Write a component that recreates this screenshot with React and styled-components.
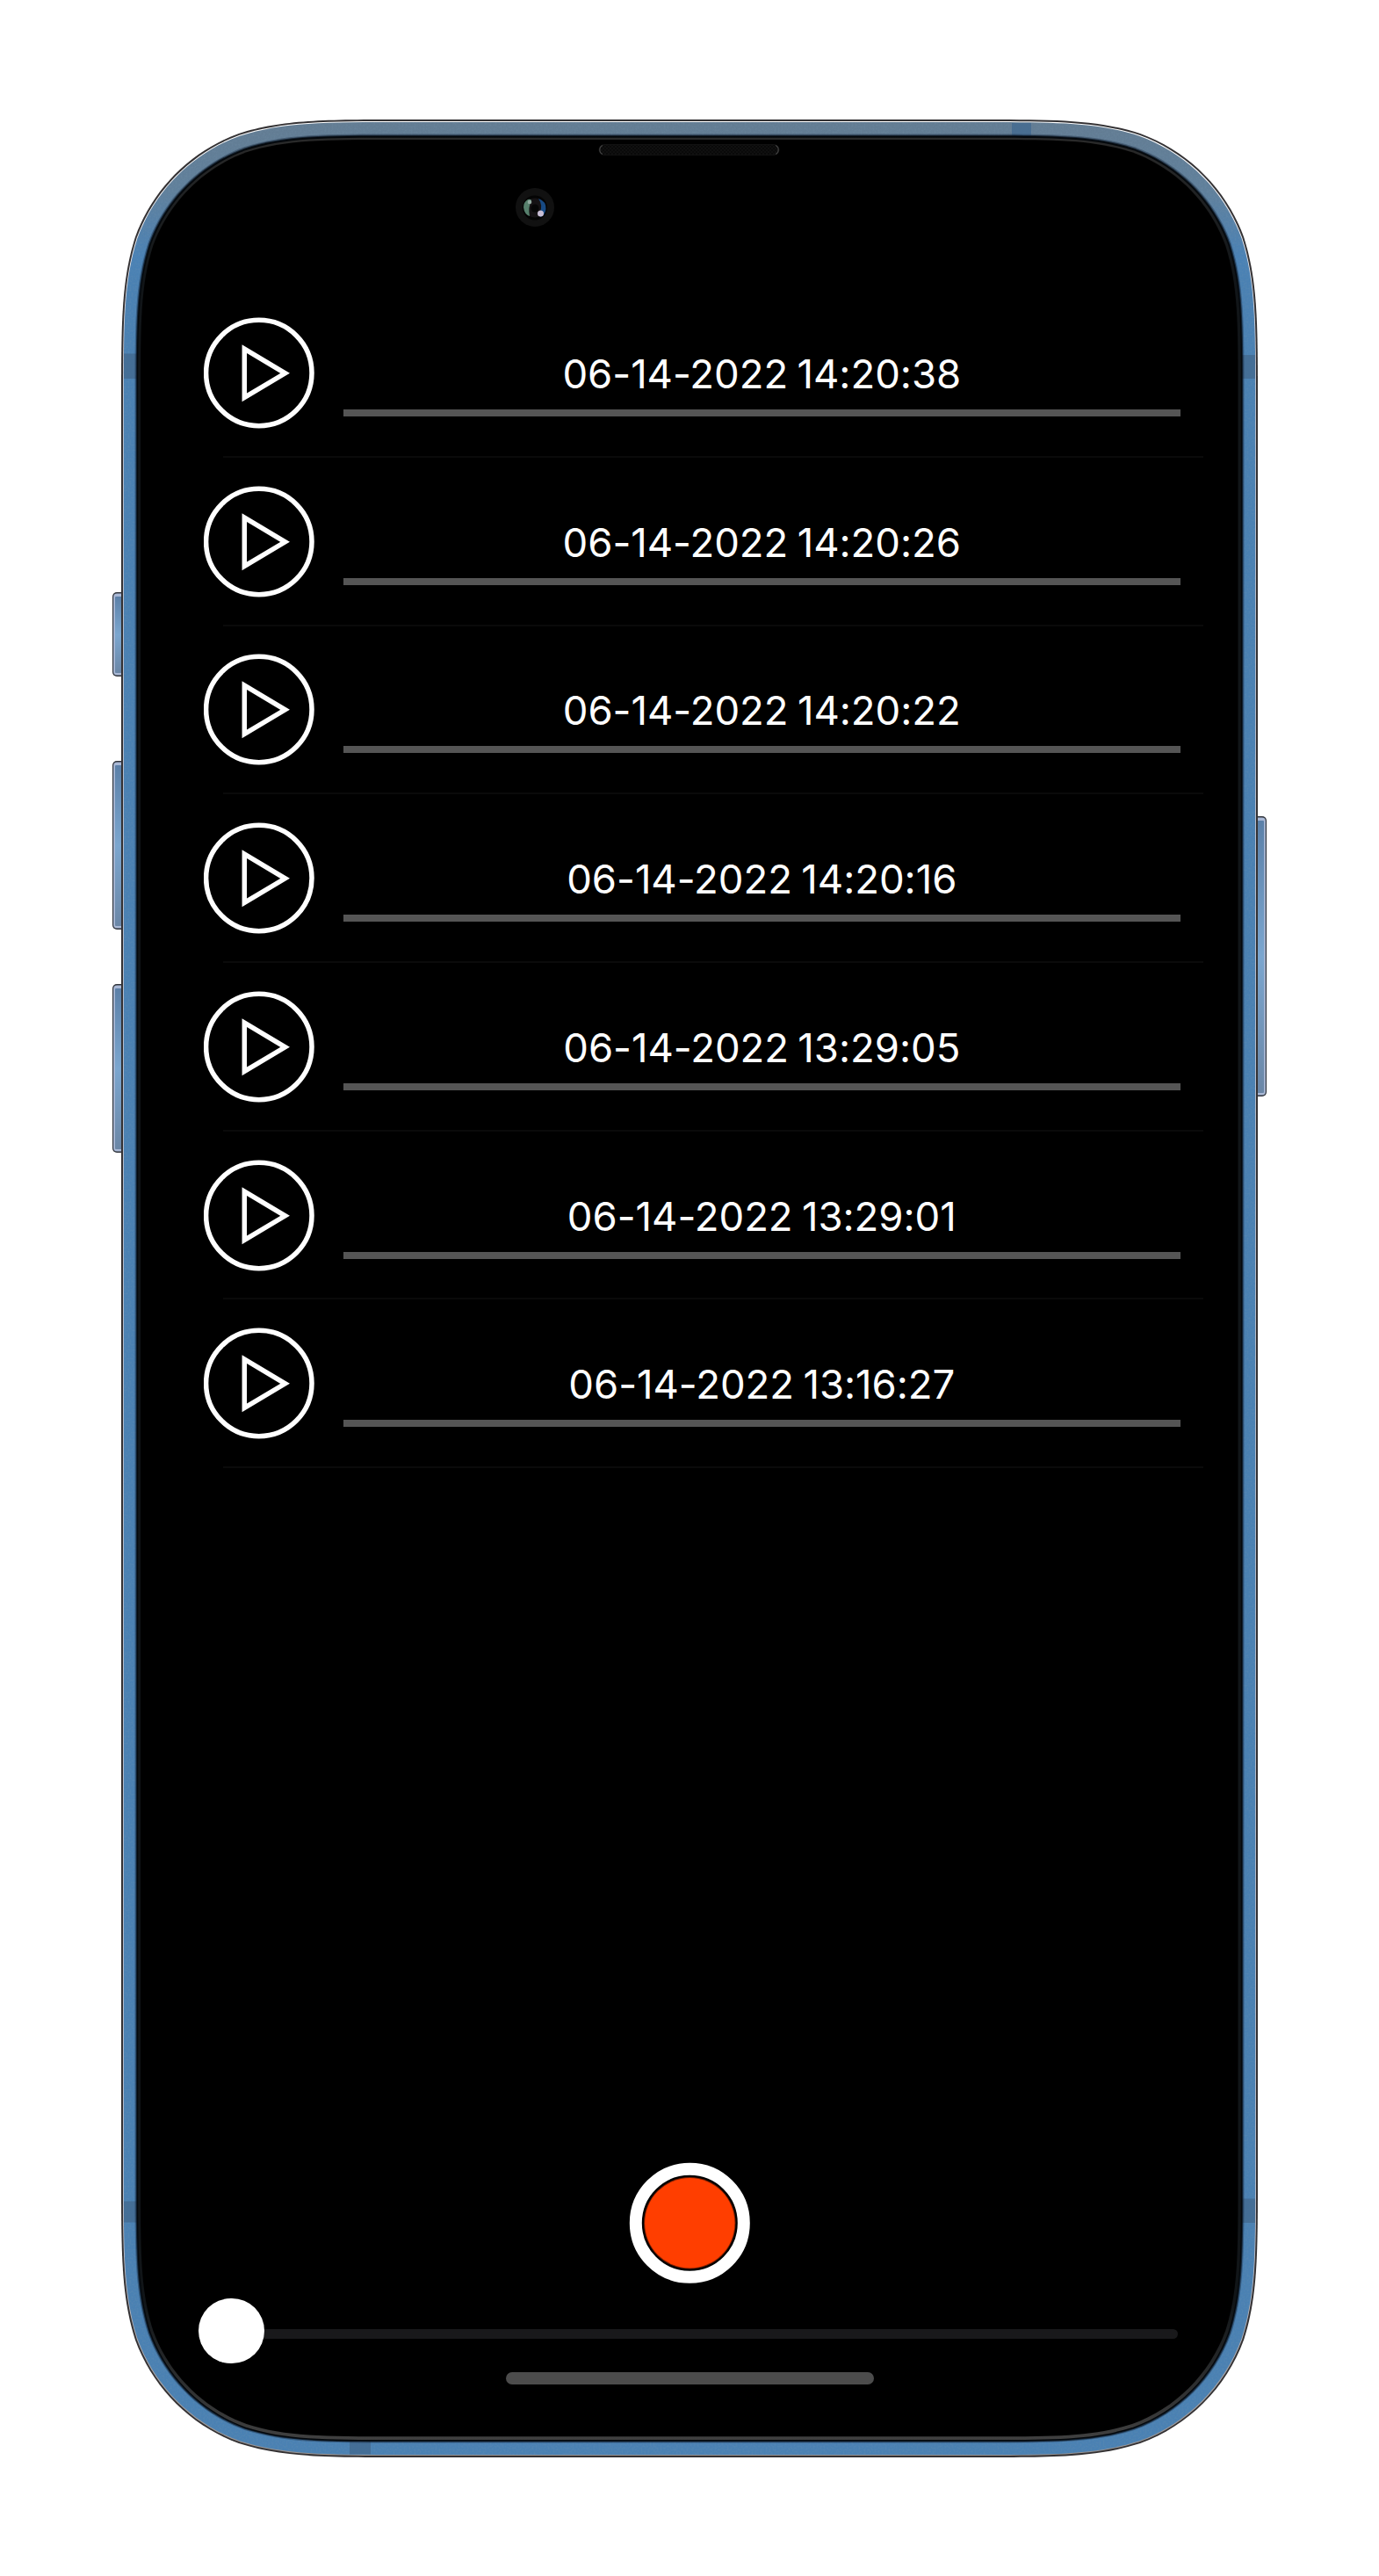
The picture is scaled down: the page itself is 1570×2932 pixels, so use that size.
import React from "react";
import styled, { createGlobalStyle } from "styled-components";

const GlobalStyle = createGlobalStyle`
  body { margin: 0; background: #fff; }
  * { box-sizing: border-box; }
`;

const Page = styled.div`
  display: grid;
  grid-template: 2932px / 1570px;
  width: 1570px;
  height: 2932px;
  overflow: hidden;
  background: #fff;
  font-family: Inter, "Liberation Sans", sans-serif;
`;

const Hardware = styled.svg`
  grid-area: 1 / 1;
  display: block;
`;

const Screen = styled.main`
  grid-area: 1 / 1;
  z-index: 1;
  display: flex;
  flex-direction: column;
  width: 1249px;
  height: 2614px;
  margin: 159px 0 0 160px;
`;

const StatusArea = styled.header`
  height: 170.3px;
  flex: none;
`;

const List = styled.ul`
  list-style: none;
  margin: 0;
  padding: 0;
  flex: 1;
`;

const Row = styled.li`
  display: flex;
  flex-direction: column;
  height: 191.7px;
`;

const RowBody = styled.div`
  display: flex;
  flex: 1;
  gap: 32.5px;
  padding: 31.8px 65px 0 72px;
`;

const Separator = styled.div`
  height: 2px;
  margin: 0 39px 0 94px;
  background: #0a0a0a;
`;

const PlayButton = styled.button`
  width: 126px;
  height: 127px;
  padding: 0;
  border: 0;
  background: none;
  flex: none;
  svg { display: block; }
`;

const Info = styled.div`
  display: flex;
  flex-direction: column;
  width: 953.5px;
  padding-top: 37px;
`;

const Stamp = styled.span`
  height: 56px;
  line-height: 56px;
  font-size: 45.5px;
  letter-spacing: ${(p) => p.$track || 0}px;
  word-spacing: -2.4px;
  color: #fff;
  text-align: center;
  white-space: nowrap;
`;

const Progress = styled.div`
  height: 8px;
  margin-top: 12px;
  background: #555;
`;

const Controls = styled.footer`
  display: flex;
  flex-direction: column;
  align-items: center;
  height: 312px;
  flex: none;
`;

const RecordButton = styled.button`
  width: 138px;
  height: 138px;
  padding: 0;
  border: 0;
  background: none;
  svg { display: block; }
`;

const Slider = styled.div`
  display: flex;
  align-items: center;
  align-self: stretch;
  height: 75px;
  margin: 16.5px 68px 0 66px;
`;

const Knob = styled.div`
  z-index: 1;
  width: 74.5px;
  height: 74.5px;
  border-radius: 50%;
  background: #fff;
  flex: none;
`;

const Track = styled.div`
  flex: 1;
  height: 11px;
  margin: 6px 0 0 -8px;
  border-radius: 0 6px 6px 0;
  background: #19191b;
`;

const HomeIndicator = styled.div`
  width: 419px;
  height: 14px;
  margin: 9px 0 0 2px;
  border-radius: 7px;
  background: #4c4c4c;
`;

/* Rounded rectangle with continuous-curvature corners. */
const squircle = (l, t, r, b, k) => {
  const A = 1.528665 * k, B = 1.08849296 * k, C = 0.86840694 * k;
  const D = 0.63149379 * k, E = 0.07491139 * k, F = 0.37282383 * k, G = 0.16905956 * k;
  return [
    `M${l + A} ${t}H${r - A}`,
    `C${r - B} ${t} ${r - C} ${t} ${r - D} ${t + E}`,
    `C${r - F} ${t + G} ${r - G} ${t + F} ${r - E} ${t + D}`,
    `C${r} ${t + C} ${r} ${t + B} ${r} ${t + A}V${b - A}`,
    `C${r} ${b - B} ${r} ${b - C} ${r - E} ${b - D}`,
    `C${r - G} ${b - F} ${r - F} ${b - G} ${r - D} ${b - E}`,
    `C${r - C} ${b} ${r - B} ${b} ${r - A} ${b}H${l + A}`,
    `C${l + B} ${b} ${l + C} ${b} ${l + D} ${b - E}`,
    `C${l + F} ${b - G} ${l + G} ${b - F} ${l + E} ${b - D}`,
    `C${l} ${b - C} ${l} ${b - B} ${l} ${b - A}V${t + A}`,
    `C${l} ${t + B} ${l} ${t + C} ${l + E} ${t + D}`,
    `C${l + G} ${t + F} ${l + F} ${t + G} ${l + D} ${t + E}`,
    `C${l + C} ${t} ${l + B} ${t} ${l + A} ${t}Z`,
  ].join("");
};

const BODY = squircle(140.8, 139, 1429.2, 2794, 209.5);

const BANDS = [
  { x: 141, y: 402.5, w: 15, h: 28.5 },
  { x: 1414, y: 404, w: 15, h: 27 },
  { x: 141, y: 2505.5, w: 15, h: 24 },
  { x: 1414, y: 2502.5, w: 15, h: 27.5 },
  { x: 1152, y: 140, w: 22, h: 16 },
  { x: 398, y: 2778, w: 24, h: 15.5 },
];

const SideKey = ({ x, y, h, right }) => (
  <g>
    <rect x={x} y={y} width="20" height={h} rx="5" fill="#30343c" />
    <rect x={x + (right ? 0 : 1.2)} y={y + 1.5} width="18.8" height={h - 3} rx="4" fill="#aab9d6" />
    <rect x={x + (right ? 0 : 3)} y={y + 5} width="17" height={h - 9} rx="1" fill="url(#key)" />
  </g>
);

const Phone = () => (
  <Hardware width="1570" height="2932" viewBox="0 0 1570 2932" aria-hidden="true">
    <defs>
      <linearGradient id="metal" gradientUnits="userSpaceOnUse" x1="0" y1="136" x2="0" y2="320">
        <stop offset="0" stopColor="#637c92" />
        <stop offset="0.45" stopColor="#60809c" />
        <stop offset="0.85" stopColor="#4a82b6" />
        <stop offset="1" stopColor="#4a81b3" />
      </linearGradient>
      <linearGradient id="rim" x1="0" y1="0" x2="0" y2="1">
        <stop offset="0" stopColor="#fff" />
        <stop offset="0.1" stopColor="#d4d0d6" />
        <stop offset="0.9" stopColor="#cfcbd2" />
        <stop offset="1" stopColor="#96918f" />
      </linearGradient>
      <linearGradient id="lip" x1="0" y1="0" x2="0" y2="1">
        <stop offset="0" stopColor="#2a2a2a" />
        <stop offset="0.06" stopColor="#111518" />
        <stop offset="0.94" stopColor="#111518" />
        <stop offset="1" stopColor="#404040" />
      </linearGradient>
      <linearGradient id="key" x1="0" y1="0" x2="0" y2="1">
        <stop offset="0" stopColor="#5b80a8" />
        <stop offset="0.5" stopColor="#7ba6cf" />
        <stop offset="1" stopColor="#6a86a6" />
      </linearGradient>
      <filter id="grain" x="0" y="0" width="1" height="1">
        <feTurbulence type="fractalNoise" baseFrequency="0.5" numOctaves="2" seed="4" />
        <feColorMatrix values="0 0 0 0 0.2  0 0 0 0 0.32  0 0 0 0 0.44  1.6 0 0 0 -0.6" />
      </filter>
      <clipPath id="bodyClip"><path d={BODY} /></clipPath>
      <pattern id="mesh" width="4" height="4" patternUnits="userSpaceOnUse">
        <rect width="4" height="4" fill="#101010" />
        <rect width="2" height="2" fill="#090909" />
        <rect x="2" y="2" width="2" height="2" fill="#090909" />
      </pattern>
    </defs>

    <SideKey x={128} y={674} h={96} />
    <SideKey x={128} y={866} h={192} />
    <SideKey x={128} y={1120} h={192} />
    <SideKey x={1422} y={929} h={319} right />

    <path d={squircle(138, 136, 1432, 2797, 212)} fill="#333133" />
    <path d={squircle(140, 138, 1430, 2795, 210)} fill="url(#rim)" />
    <path d={BODY} fill="url(#metal)" />
    <g clipPath="url(#bodyClip)">
      <rect x="138" y="136" width="1294" height="2661" filter="url(#grain)" opacity="0.3" />
      {BANDS.map((b, i) => (
        <rect key={i} x={b.x} y={b.y} width={b.w} height={b.h} fill="#436a90" fillOpacity="0.82" />
      ))}
    </g>
    <path d={squircle(153.5, 152.5, 1416.5, 2780.5, 197)} fill="#102033" fillOpacity="0.35" />
    <path d={squircle(154.7, 153.7, 1415.3, 2779.5, 196)} fill="#0a1420" fillOpacity="0.75" />
    <path d={squircle(155.8, 154.8, 1414.2, 2778.5, 195)} fill="#04080c" />
    <path d={squircle(157.2, 156.8, 1412.8, 2777, 193.5)} fill="url(#lip)" />
    <path d={squircle(160, 159, 1409.5, 2773.3, 191)} fill="#000" />

    <rect x="682" y="164.5" width="205" height="12" rx="6" fill="url(#mesh)" stroke="#111" />
    <path d="M686 165.5a5.5 5.5 0 0 0 0 10M883 165.5a5.5 5.5 0 0 1 0 10" fill="none" stroke="#444" strokeWidth="1.2" />

    <circle cx="609" cy="236" r="22" fill="#111" />
    <circle cx="609" cy="236.5" r="14" fill="#040404" />
    <circle cx="609" cy="236.5" r="11" fill="#151214" />
    <path d="M601 227q3-1 4 1q-4 8-2 18q-6-2-7-10q0-6 5-9z" fill="#567f6c" />
    <path d="M613 226q9 3 8.5 12q-1 7-6 9q-3-2-1-5q4-8-1.5-16z" fill="#174a84" />
    <circle cx="609" cy="237" r="4.5" fill="#060606" />
    <circle cx="603" cy="230" r="2.3" fill="#93aaa0" />
    <circle cx="615.5" cy="243" r="3.5" fill="#c9bfd6" />
  </Hardware>
);

const PlayIcon = () => (
  <svg width="126" height="127" viewBox="0 0 126 127" fill="none" stroke="#fff">
    <circle cx="62.8" cy="63.5" r="60.2" strokeWidth="5.5" />
    <path d="M46.3 36.2V91.4L92.6 63.8Z" strokeWidth="5.5" />
  </svg>
);

const RecordIcon = () => (
  <svg width="138" height="138" viewBox="0 0 138 138" fill="none">
    <circle cx="69.3" cy="69.3" r="61.5" stroke="#fff" strokeWidth="14" />
    <circle cx="69.3" cy="69.3" r="52.2" fill="#7a1e00" />
    <circle cx="69.3" cy="69.3" r="51.2" fill="#ff3e00" />
  </svg>
);

const RECORDINGS = [
  "06-14-2022 14:20:38",
  "06-14-2022 14:20:26",
  "06-14-2022 14:20:22",
  "06-14-2022 14:20:16",
  "06-14-2022 13:29:05",
  "06-14-2022 13:29:01",
  "06-14-2022 13:16:27",
];

const Recording = ({ label }) => (
  <Row>
    <RowBody>
      <PlayButton aria-label="Play"><PlayIcon /></PlayButton>
      <Info>
        <Stamp $track={-0.03}>{label}</Stamp>
        <Progress />
      </Info>
    </RowBody>
    <Separator />
  </Row>
);

export default function App() {
  return (
    <Page>
      <GlobalStyle />
      <Phone />
      <Screen>
        <StatusArea />
        <List>
          {RECORDINGS.map((label) => <Recording key={label} label={label} />)}
        </List>
        <Controls>
          <RecordButton aria-label="Record"><RecordIcon /></RecordButton>
          <Slider>
            <Knob />
            <Track />
          </Slider>
          <HomeIndicator />
        </Controls>
      </Screen>
    </Page>
  );
}
